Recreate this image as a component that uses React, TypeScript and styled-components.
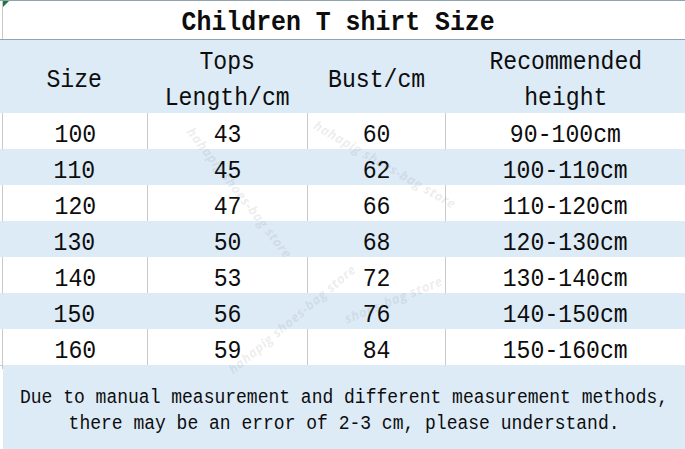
import React from "react";
import styled, { createGlobalStyle } from "styled-components";

const Global = createGlobalStyle`
  html, body { margin: 0; padding: 0; background: #ffffff; }
  #root { width: 685px; height: 449px; overflow: hidden; }
`;

const BLUE = "#ddebf7";
const GRID = "#c9c9c9";
const MONO = `"Liberation Mono", "DejaVu Sans Mono", monospace`;

const Sheet = styled.div`
  position: relative;
  width: 685px;
  height: 449px;
  display: flex;
  flex-direction: column;
  font-family: ${MONO};
  color: #0d0d0d;
  overflow: hidden;
`;

/* SimSun-like narrow monospace: taller glyphs squeezed horizontally */
const Narrow = styled.span<{ $size: number; $scale: number; $bold?: boolean }>`
  display: inline-block;
  font-size: ${(p) => p.$size}px;
  font-weight: ${(p) => (p.$bold ? "bold" : "normal")};
  transform: scaleX(${(p) => p.$scale});
  white-space: nowrap;
`;

const TitleRow = styled.div`
  height: 38px;
  border-top: 1px solid #8ea4b3;
  border-bottom: 1px solid #8ea4b3;
  padding-left: 2px;
  display: flex;
`;

const TitleCell = styled.div`
  flex: 1;
  border-left: 1px solid ${GRID};
  display: flex;
  align-items: center;
  justify-content: center;
  padding-right: 12px;
  padding-top: 7px;
  line-height: 31px;
  position: relative;
  &::before {
    content: "";
    position: absolute;
    left: 0;
    top: 0;
    border-top: 6px solid #1e7a3a;
    border-right: 6px solid transparent;
  }
`;

const Row = styled.div<{ $blue?: boolean; $h: number }>`
  height: ${(p) => p.$h}px;
  display: grid;
  padding-left: ${(p) => (p.$blue ? 0 : 2)}px;
  grid-template-columns: ${(p) => (p.$blue ? "147px 160px 138px 1fr" : "145px 160px 138px 1fr")};
  background: ${(p) => (p.$blue ? BLUE : "#ffffff")};
`;

const Cell = styled.div<{ $lined?: boolean }>`
  display: flex;
  flex-direction: column;
  align-items: center;
  justify-content: center;
  line-height: 36px;
  padding-top: 4px;
  box-sizing: border-box;
  border-left: 1px solid ${(p) => (p.$lined ? GRID : "transparent")};
  white-space: nowrap;
`;

const HeadCell = styled(Cell)`
  padding-top: 4px;
`;

const Footer = styled.div`
  flex: 1;
  margin-left: 3px;
  background: ${BLUE};
  display: flex;
  flex-direction: column;
  align-items: center;
  justify-content: center;
  padding-top: 8px;
  line-height: 26px;
  white-space: nowrap;
  position: relative;
  &::before {
    content: "";
    position: absolute;
    left: -3px;
    top: 0;
    width: 3px;
    border-top: 1px solid ${GRID};
  }
`;

const Watermark = styled.div<{ $x: number; $y: number; $r: number }>`
  position: absolute;
  left: ${(p) => p.$x}px;
  top: ${(p) => p.$y}px;
  transform: rotate(${(p) => p.$r}deg);
  transform-origin: left center;
  font-family: "Open Sans", "DejaVu Sans", sans-serif;
  font-style: italic;
  font-weight: bold;
  font-size: 13px;
  color: rgba(120, 120, 120, 0.15);
  white-space: nowrap;
  pointer-events: none;
  letter-spacing: 0.5px;
`;

const rows = [
  ["100", "43", "60", "90-100cm"],
  ["110", "45", "62", "100-110cm"],
  ["120", "47", "66", "110-120cm"],
  ["130", "50", "68", "120-130cm"],
  ["140", "53", "72", "130-140cm"],
  ["150", "56", "76", "140-150cm"],
  ["160", "59", "84", "150-160cm"],
];

const D = ({ children }: { children: React.ReactNode }) => (
  <Narrow $size={26} $scale={0.89}>
    {children}
  </Narrow>
);

export default function App() {
  return (
    <>
      <Global />
      <Sheet>
        <TitleRow>
          <TitleCell>
            <Narrow $size={27} $scale={0.92} $bold>
              Children T shirt Size
            </Narrow>
          </TitleCell>
        </TitleRow>
        <Row $blue $h={73}>
          <HeadCell>
            <D>Size</D>
          </HeadCell>
          <HeadCell>
            <D>Tops</D>
            <D>Length/cm</D>
          </HeadCell>
          <HeadCell>
            <D>Bust/cm</D>
          </HeadCell>
          <HeadCell>
            <D>Recommended</D>
            <D>height</D>
          </HeadCell>
        </Row>
        {rows.map((r, i) => {
          const blue = i % 2 === 1;
          return (
            <Row key={r[0]} $blue={blue} $h={36}>
              {r.map((v, j) => (
                <Cell key={j} $lined={!blue}>
                  <D>{v}</D>
                </Cell>
              ))}
            </Row>
          );
        })}
        <Footer>
          <Narrow $size={20} $scale={0.9}>
            Due to manual measurement and different measurement methods,
          </Narrow>
          <Narrow $size={20} $scale={0.9}>
            there may be an error of 2-3 cm, please understand.
          </Narrow>
        </Footer>
        <Watermark $x={190} $y={120} $r={52}>hahapig shoes-bag store</Watermark>
        <Watermark $x={315} $y={115} $r={30}>hahapig shoes-bag store</Watermark>
        <Watermark $x={230} $y={362} $r={-40}>hahapig shoes-bag store</Watermark>
        <Watermark $x={345} $y={310} $r={-22}>shoes-bag store</Watermark>
      </Sheet>
    </>
  );
}
